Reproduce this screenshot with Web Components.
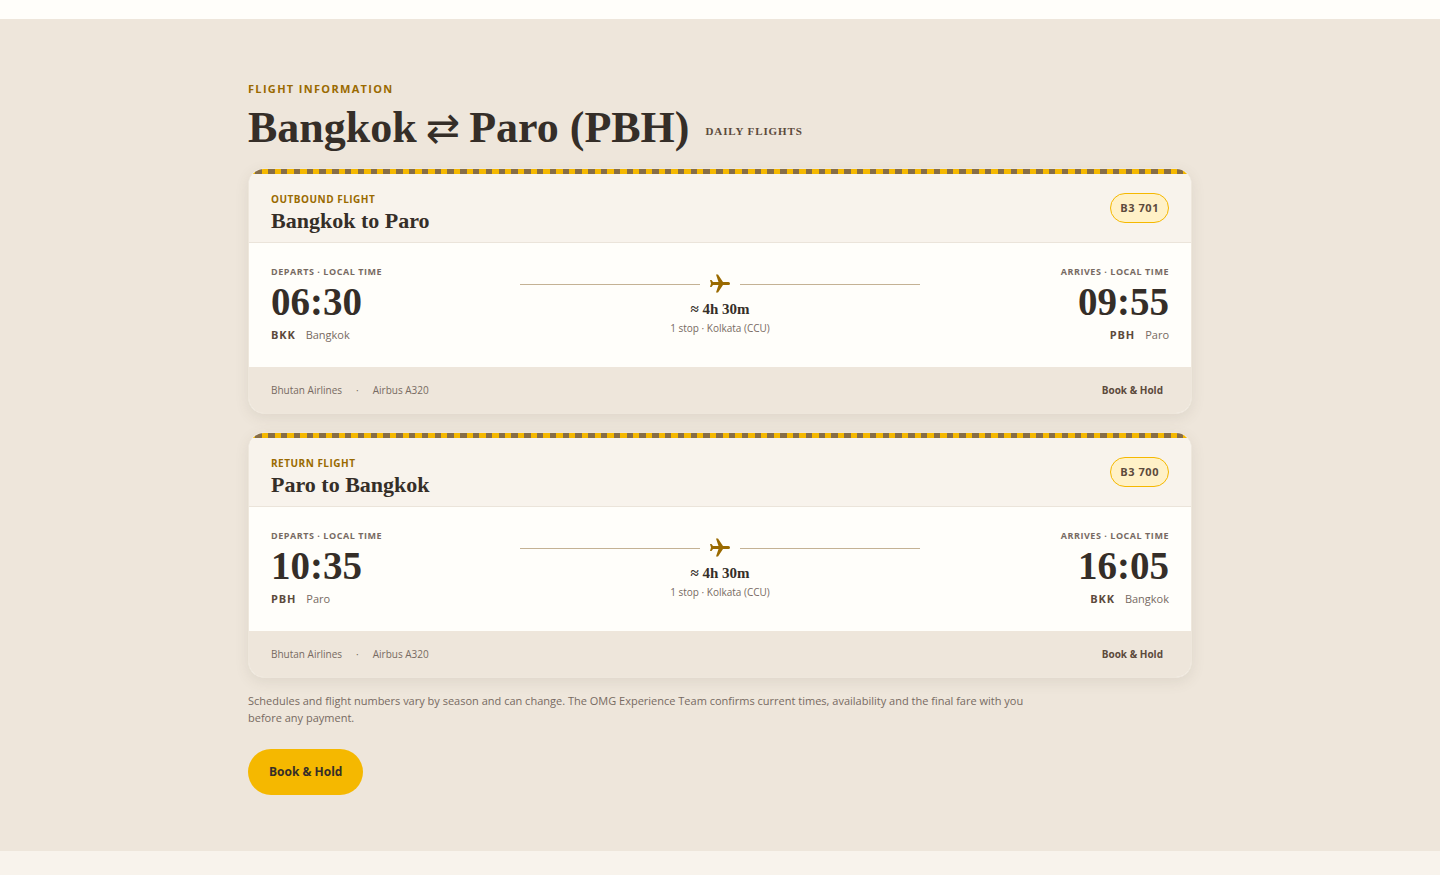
<!DOCTYPE html>
<html lang="en">
<head>
<meta charset="utf-8">
<meta name="viewport" content="width=device-width, initial-scale=1">
<title>Flight information</title>
<style>
  :root {
    --ink: #352e28;
    --brown: #5c4a3c;
    --muted: #776a62;
    --gold: #9a6a00;
    --yellow: #f5b800;
    --sand: #eee6db;
    --cream: #f8f3ec;
    --paper: #fffefa;
    --serif: "Liberation Serif", serif;
    --sans: "Open Sans", "Liberation Sans", sans-serif;
  }
  body {
    margin: 0;
    background: var(--cream);
    color: var(--ink);
    font-family: var(--sans);
  }
</style>
</head>
<body>
<flight-section>
  <flight-card kind="Outbound flight" number="B3 701"
    from="Bangkok" from-code="BKK" departs="06:30"
    to="Paro" to-code="PBH" arrives="09:55"></flight-card>
  <flight-card kind="Return flight" number="B3 700"
    from="Paro" from-code="PBH" departs="10:35"
    to="Bangkok" to-code="BKK" arrives="16:05"></flight-card>
  <span slot="note">Schedules and flight numbers vary by season and can change. The OMG Experience Team confirms current times, availability and the final fare with you before any payment.</span>
</flight-section>

<script>
class FlightStop extends HTMLElement {
  connectedCallback() {
    if (!this.shadowRoot) {
      this.attachShadow({ mode: "open" });
    }
    this.render();
  }

  render() {
    this.shadowRoot.innerHTML = `
      <style>
        :host {
          display: flex;
          flex-direction: column;
          align-items: flex-start;
        }
        :host([align="end"]) {
          align-items: flex-end;
        }
        .label {
          font-size: 9px;
          line-height: 16px;
          font-weight: 700;
          letter-spacing: 0.06em;
          text-transform: uppercase;
          color: var(--muted);
        }
        .time {
          font: 700 39px/44px var(--serif);
        }
        .place {
          display: flex;
          gap: 10px;
          font-size: 11px;
          line-height: 20px;
          color: var(--muted);
          margin-top: 1px;
        }
        .place b {
          letter-spacing: 0.08em;
          color: var(--brown);
        }
      </style>
      <span class="label">${this.getAttribute("label")} · Local time</span>
      <time class="time">${this.getAttribute("time")}</time>
      <span class="place"><b>${this.getAttribute("code")}</b><span>${this.getAttribute("city")}</span></span>
    `;
  }
}

class FlightCard extends HTMLElement {
  connectedCallback() {
    if (!this.shadowRoot) {
      this.attachShadow({ mode: "open" });
    }
    this.render();
  }

  render() {
    const get = (name) => this.getAttribute(name);
    this.shadowRoot.innerHTML = `
      <style>
        :host {
          display: block;
          border: 1px solid #eee7dc;
          border-radius: 16px;
          overflow: hidden;
          background: var(--paper);
          box-shadow: 0 4px 14px rgba(92, 74, 60, 0.1);
        }
        /* five yellow and brown blocks per 64px tile */
        .stripe {
          height: 5px;
          background: repeating-linear-gradient(90deg, var(--yellow) 0 10%, #866d48 10% 20%) 0 0 / 64px 100%;
        }
        header {
          display: flex;
          justify-content: space-between;
          align-items: flex-start;
          padding: 17px 22px 7px;
          background: var(--cream);
          border-bottom: 1px solid #ebe4da;
        }
        .kind {
          margin: 0;
          font-size: 10px;
          line-height: 16px;
          font-weight: 700;
          letter-spacing: 0.05em;
          text-transform: uppercase;
          color: var(--gold);
        }
        h3 {
          margin: 0;
          font: 700 22px/28px var(--serif);
        }
        .number {
          margin-top: 2px;
          padding: 0 9px;
          border: 1px solid var(--yellow);
          border-radius: 15px;
          background: #fff1c7;
          font-size: 11px;
          line-height: 28px;
          font-weight: 700;
          letter-spacing: 0.05em;
          color: var(--brown);
        }
        .route {
          display: grid;
          grid-template-columns: 1fr 400px 1fr;
          padding: 21px 22px 22px;
        }
        .middle {
          display: flex;
          flex-direction: column;
          align-items: center;
          padding-top: 8px;
        }
        .path {
          display: flex;
          align-items: center;
          gap: 8px;
          align-self: stretch;
        }
        .path i {
          flex: 1;
          height: 1px;
          background: #c4b294;
        }
        .path svg {
          display: block;
          width: 24px;
          height: 24px;
          fill: var(--gold);
        }
        .duration {
          font: 700 15px/18px var(--serif);
          margin-top: 4px;
        }
        .stops {
          font-size: 10px;
          line-height: 20px;
          color: var(--muted);
        }
        footer {
          display: flex;
          justify-content: space-between;
          align-items: center;
          padding: 0 22px;
          background: var(--sand);
          font-size: 10px;
          line-height: 46px;
          color: var(--muted);
        }
        .plane {
          display: flex;
          gap: 14px;
        }
        a {
          padding-right: 6px;
          font-weight: 700;
          color: var(--brown);
          text-decoration: none;
        }
      </style>
      <div class="stripe"></div>
      <header>
        <div>
          <p class="kind">${get("kind")}</p>
          <h3>${get("from")} to ${get("to")}</h3>
        </div>
        <span class="number">${get("number")}</span>
      </header>
      <div class="route">
        <flight-stop label="Departs" time="${get("departs")}" code="${get("from-code")}" city="${get("from")}"></flight-stop>
        <div class="middle">
          <div class="path">
            <i></i>
            <svg viewBox="0 0 24 24" aria-hidden="true"><path transform="rotate(90 12 12)" d="M20.500 16v-2l-7.500-5V3.500a1.500 1.500 0 0 0-3 0V9l-7.500 5v2l7.500-2.500V19l-2 1.500V22l3.500-1 3.500 1v-1.500L13 19v-5.500z"/></svg>
            <i></i>
          </div>
          <span class="duration">≈ 4h 30m</span>
          <span class="stops">1 stop · Kolkata (CCU)</span>
        </div>
        <flight-stop align="end" label="Arrives" time="${get("arrives")}" code="${get("to-code")}" city="${get("to")}"></flight-stop>
      </div>
      <footer>
        <span class="plane"><span>Bhutan Airlines</span><span>·</span><span>Airbus A320</span></span>
        <a href="#book">Book &amp; Hold</a>
      </footer>
    `;
  }
}

class FlightSection extends HTMLElement {
  connectedCallback() {
    if (!this.shadowRoot) {
      this.attachShadow({ mode: "open" });
    }
    this.render();
  }

  render() {
    this.shadowRoot.innerHTML = `
      <style>
        :host {
          display: block;
          border-top: 19px solid var(--paper);
          background: var(--sand);
        }
        section {
          max-width: 944px;
          margin: 0 auto;
          padding: 61px 24px 56px;
        }
        .eyebrow {
          margin: 0;
          font-size: 11px;
          line-height: 18px;
          font-weight: 700;
          letter-spacing: 0.12em;
          text-transform: uppercase;
          color: var(--gold);
        }
        .title {
          display: flex;
          align-items: center;
          gap: 16px;
        }
        h2 {
          display: flex;
          align-items: baseline;
          gap: 9px;
          margin: 0;
          font: 700 44px/60px var(--serif);
        }
        .swap {
          font-family: "DejaVu Sans", sans-serif;
          font-size: 41px;
          font-weight: 400;
        }
        .daily {
          padding-top: 6px;
          font: 700 11px/18px var(--serif);
          letter-spacing: 0.08em;
          text-transform: uppercase;
          color: var(--brown);
        }
        .cards {
          display: flex;
          flex-direction: column;
          gap: 18px;
          margin-top: 10px;
        }
        .note {
          max-width: 808px;
          margin: 14px 0 23px;
          font-size: 11px;
          line-height: 17px;
          color: var(--muted);
        }
        button {
          display: block;
          padding: 0 21px;
          border: 0;
          border-radius: 23px;
          background: var(--yellow);
          font: 700 12px/46px var(--sans);
          color: var(--ink);
        }
      </style>
      <section>
        <p class="eyebrow">Flight information</p>
        <div class="title">
          <h2><span>Bangkok</span><span class="swap">⇄</span><span>Paro (PBH)</span></h2>
          <span class="daily">Daily flights</span>
        </div>
        <div class="cards"><slot></slot></div>
        <p class="note"><slot name="note"></slot></p>
        <button type="button" id="book">Book &amp; Hold</button>
      </section>
    `;
  }
}

customElements.define("flight-stop", FlightStop);
customElements.define("flight-card", FlightCard);
customElements.define("flight-section", FlightSection);
</script>
</body>
</html>
